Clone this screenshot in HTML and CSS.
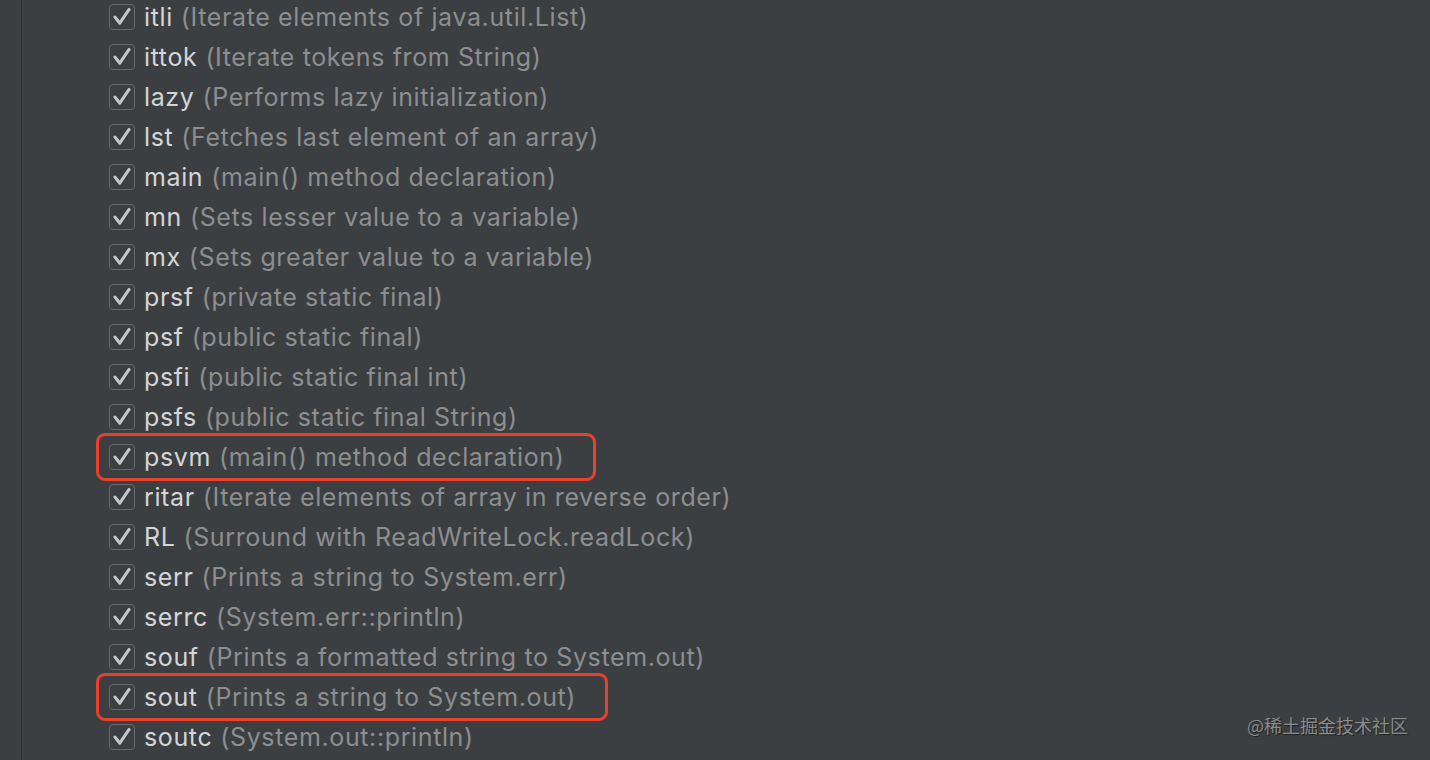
FILE: index.html
```html
<!DOCTYPE html>
<html>
<head>
<meta charset="utf-8">
<link rel="stylesheet" href="styles.css">
</head>
<body>
<div class="page">
  <div class="gutter"></div>
  <ul class="list">
    <li class="row"><span class="cb"><svg viewBox="0 0 27 27"><path d="M5.5 13.5 L11 20.5 L21.5 5"/></svg></span><span class="name">itli</span><span class="desc">(Iterate elements of java.util.List)</span></li>
    <li class="row"><span class="cb"><svg viewBox="0 0 27 27"><path d="M5.5 13.5 L11 20.5 L21.5 5"/></svg></span><span class="name">ittok</span><span class="desc">(Iterate tokens from String)</span></li>
    <li class="row"><span class="cb"><svg viewBox="0 0 27 27"><path d="M5.5 13.5 L11 20.5 L21.5 5"/></svg></span><span class="name">lazy</span><span class="desc">(Performs lazy initialization)</span></li>
    <li class="row"><span class="cb"><svg viewBox="0 0 27 27"><path d="M5.5 13.5 L11 20.5 L21.5 5"/></svg></span><span class="name">lst</span><span class="desc">(Fetches last element of an array)</span></li>
    <li class="row"><span class="cb"><svg viewBox="0 0 27 27"><path d="M5.5 13.5 L11 20.5 L21.5 5"/></svg></span><span class="name">main</span><span class="desc">(main() method declaration)</span></li>
    <li class="row"><span class="cb"><svg viewBox="0 0 27 27"><path d="M5.5 13.5 L11 20.5 L21.5 5"/></svg></span><span class="name">mn</span><span class="desc">(Sets lesser value to a variable)</span></li>
    <li class="row"><span class="cb"><svg viewBox="0 0 27 27"><path d="M5.5 13.5 L11 20.5 L21.5 5"/></svg></span><span class="name">mx</span><span class="desc">(Sets greater value to a variable)</span></li>
    <li class="row"><span class="cb"><svg viewBox="0 0 27 27"><path d="M5.5 13.5 L11 20.5 L21.5 5"/></svg></span><span class="name">prsf</span><span class="desc">(private static final)</span></li>
    <li class="row"><span class="cb"><svg viewBox="0 0 27 27"><path d="M5.5 13.5 L11 20.5 L21.5 5"/></svg></span><span class="name">psf</span><span class="desc">(public static final)</span></li>
    <li class="row"><span class="cb"><svg viewBox="0 0 27 27"><path d="M5.5 13.5 L11 20.5 L21.5 5"/></svg></span><span class="name">psfi</span><span class="desc">(public static final int)</span></li>
    <li class="row"><span class="cb"><svg viewBox="0 0 27 27"><path d="M5.5 13.5 L11 20.5 L21.5 5"/></svg></span><span class="name">psfs</span><span class="desc">(public static final String)</span></li>
    <li class="row hl"><span class="cb"><svg viewBox="0 0 27 27"><path d="M5.5 13.5 L11 20.5 L21.5 5"/></svg></span><span class="name">psvm</span><span class="desc">(main() method declaration)</span></li>
    <li class="row"><span class="cb"><svg viewBox="0 0 27 27"><path d="M5.5 13.5 L11 20.5 L21.5 5"/></svg></span><span class="name">ritar</span><span class="desc">(Iterate elements of array in reverse order)</span></li>
    <li class="row"><span class="cb"><svg viewBox="0 0 27 27"><path d="M5.5 13.5 L11 20.5 L21.5 5"/></svg></span><span class="name">RL</span><span class="desc">(Surround with ReadWriteLock.readLock)</span></li>
    <li class="row"><span class="cb"><svg viewBox="0 0 27 27"><path d="M5.5 13.5 L11 20.5 L21.5 5"/></svg></span><span class="name">serr</span><span class="desc">(Prints a string to System.err)</span></li>
    <li class="row"><span class="cb"><svg viewBox="0 0 27 27"><path d="M5.5 13.5 L11 20.5 L21.5 5"/></svg></span><span class="name">serrc</span><span class="desc">(System.err::println)</span></li>
    <li class="row"><span class="cb"><svg viewBox="0 0 27 27"><path d="M5.5 13.5 L11 20.5 L21.5 5"/></svg></span><span class="name">souf</span><span class="desc">(Prints a formatted string to System.out)</span></li>
    <li class="row hl"><span class="cb"><svg viewBox="0 0 27 27"><path d="M5.5 13.5 L11 20.5 L21.5 5"/></svg></span><span class="name">sout</span><span class="desc">(Prints a string to System.out)</span></li>
    <li class="row"><span class="cb"><svg viewBox="0 0 27 27"><path d="M5.5 13.5 L11 20.5 L21.5 5"/></svg></span><span class="name">soutc</span><span class="desc">(System.out::println)</span></li>
  </ul>
  <div class="watermark">@稀土掘金技术社区</div>
</div>
</body>
</html>
```
FILE: styles.css
```css
html, body {
  margin: 0;
  padding: 0;
  background: #3c3f41;
  overflow: hidden;
}
.page {
  position: relative;
  display: flex;
  width: 1430px;
  height: 760px;
  font-family: Inter, "Noto Sans", sans-serif;
}
.gutter {
  width: 21px;
  height: 100%;
  border-right: 1px solid #2f3133;
  flex: none;
}
.list {
  list-style: none;
  margin: -3px 0 0 0;
  padding: 0 0 0 87px;
  display: flex;
  flex-direction: column;
}
.row {
  position: relative;
  height: 40px;
  display: flex;
  align-items: center;
  align-self: flex-start;
  font-size: 25px;
  letter-spacing: 0.62px;
  white-space: nowrap;
}
.cb {
  width: 24px;
  height: 24px;
  border: 1.5px solid #66696b;
  border-radius: 4px;
  display: flex;
  flex: none;
  margin-right: 9px;
}
.cb svg {
  width: 24px;
  height: 24px;
}
.cb path {
  fill: none;
  stroke: #c4c6c7;
  stroke-width: 3.4;
  stroke-linecap: round;
  stroke-linejoin: round;
}
.name {
  color: #d3d5d6;
  font-weight: 400;
  margin-right: 8px;
}
.desc {
  color: #8c8e90;
}
.hl::before {
  content: "";
  position: absolute;
  top: -4px;
  bottom: -4px;
  left: -13px;
  right: -32px;
  border: 3px solid #e8412c;
  border-radius: 9px;
}
.watermark {
  position: absolute;
  right: 22px;
  bottom: 22px;
  font-family: "Noto Sans CJK SC", sans-serif;
  font-size: 18px;
  color: #8a8b8d;
  text-shadow: 1px 1px 1px #1e1f20;
}
```
